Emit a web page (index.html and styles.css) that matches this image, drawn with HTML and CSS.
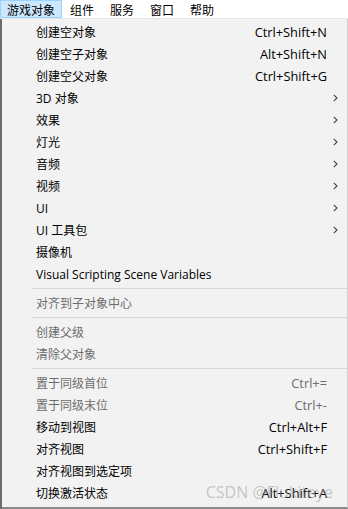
FILE: index.html
```html
<!DOCTYPE html>
<html lang="zh">
<head>
<meta charset="utf-8">
<link rel="stylesheet" href="styles.css">
</head>
<body>
<div class="menubar">
  <span class="mb-item active">游戏对象</span>
  <span class="mb-item">组件</span>
  <span class="mb-item">服务</span>
  <span class="mb-item">窗口</span>
  <span class="mb-item">帮助</span>
</div>
<div class="stage">
  <div class="behind"></div>
  <div class="menu">
    <div class="row"><span class="label">创建空对象</span><span class="key">Ctrl+Shift+N</span></div>
    <div class="row"><span class="label">创建空子对象</span><span class="key">Alt+Shift+N</span></div>
    <div class="row"><span class="label">创建空父对象</span><span class="key">Ctrl+Shift+G</span></div>
    <div class="row"><span class="label">3D 对象</span><svg class="chev" width="5" height="8" viewBox="0 0 5 8"><polyline points="0.8,0.8 4,4 0.8,7.2" fill="none" stroke="#444" stroke-width="1.1"/></svg></div>
    <div class="row"><span class="label">效果</span><svg class="chev" width="5" height="8" viewBox="0 0 5 8"><polyline points="0.8,0.8 4,4 0.8,7.2" fill="none" stroke="#444" stroke-width="1.1"/></svg></div>
    <div class="row"><span class="label">灯光</span><svg class="chev" width="5" height="8" viewBox="0 0 5 8"><polyline points="0.8,0.8 4,4 0.8,7.2" fill="none" stroke="#444" stroke-width="1.1"/></svg></div>
    <div class="row"><span class="label">音频</span><svg class="chev" width="5" height="8" viewBox="0 0 5 8"><polyline points="0.8,0.8 4,4 0.8,7.2" fill="none" stroke="#444" stroke-width="1.1"/></svg></div>
    <div class="row"><span class="label">视频</span><svg class="chev" width="5" height="8" viewBox="0 0 5 8"><polyline points="0.8,0.8 4,4 0.8,7.2" fill="none" stroke="#444" stroke-width="1.1"/></svg></div>
    <div class="row"><span class="label">UI</span><svg class="chev" width="5" height="8" viewBox="0 0 5 8"><polyline points="0.8,0.8 4,4 0.8,7.2" fill="none" stroke="#444" stroke-width="1.1"/></svg></div>
    <div class="row"><span class="label">UI 工具包</span><svg class="chev" width="5" height="8" viewBox="0 0 5 8"><polyline points="0.8,0.8 4,4 0.8,7.2" fill="none" stroke="#444" stroke-width="1.1"/></svg></div>
    <div class="row"><span class="label">摄像机</span></div>
    <div class="row"><span class="label">Visual Scripting Scene Variables</span></div>
    <div class="sep"></div>
    <div class="row disabled"><span class="label">对齐到子对象中心</span></div>
    <div class="sep"></div>
    <div class="row disabled"><span class="label">创建父级</span></div>
    <div class="row disabled"><span class="label">清除父对象</span></div>
    <div class="sep"></div>
    <div class="row disabled"><span class="label">置于同级首位</span><span class="key">Ctrl+=</span></div>
    <div class="row disabled"><span class="label">置于同级末位</span><span class="key">Ctrl+-</span></div>
    <div class="row"><span class="label">移动到视图</span><span class="key">Ctrl+Alt+F</span></div>
    <div class="row"><span class="label">对齐视图</span><span class="key">Ctrl+Shift+F</span></div>
    <div class="row"><span class="label">对齐视图到选定项</span></div>
    <div class="row"><span class="label">切换激活状态</span><span class="key">Alt+Shift+A</span></div>
    <div class="watermark">CSDN @Flukiteye</div>
  </div>
</div>
</body>
</html>
```
FILE: styles.css
```css
* { box-sizing: border-box; }
html, body {
  margin: 0;
  padding: 0;
  width: 348px;
  height: 509px;
  overflow: hidden;
  background: #f0f0f0;
  font-family: "Open Sans", "Noto Sans CJK SC", sans-serif;
  font-size: 12px;
  color: #000;
}
.menubar {
  display: flex;
  height: 19px;
  background: #fff;
  border-bottom: 1px solid #e6e6e6;
}
.mb-item {
  padding: 0 7px;
  height: 18px;
  line-height: 17px;
  font-family: "Noto Sans CJK SC", sans-serif;
  border: 1px solid transparent;
}
.mb-item.active {
  background: #cce8ff;
  border-color: #99d1ff;
  padding: 0 6px;
}
.stage {
  display: flex;
  height: 490px;
}
.behind {
  width: 2px;
  background: #6b6b6b;
}
.menu {
  position: relative;
  flex: 1;
  background: #f2f2f2;
  border-right: 1px solid #cfcfcf;
  border-bottom: 2px solid #8a8a8a;
  padding: 2px 0 0 0;
}
.row {
  display: flex;
  align-items: center;
  height: 22px;
  padding: 0 8px 0 34px;
}
.label {
  flex: 1;
  font-family: "Open Sans", "Noto Sans CJK SC", sans-serif;
  white-space: nowrap;
}
.key {
  margin-right: 12px;
  font-family: "Open Sans", "Noto Sans CJK SC", sans-serif;
  font-size: 12.8px;
}
.chev { margin-right: 1px; }
.disabled { color: #6d6d6d; }
.sep {
  height: 7px;
  margin-left: 30px;
  display: flex;
  align-items: center;
}
.sep::after {
  content: "";
  flex: 1;
  height: 1px;
  background: #d7d7d7;
}
.watermark {
  position: absolute;
  right: 14px;
  bottom: 4px;
  font-family: "Open Sans", sans-serif;
  font-size: 16px;
  color: rgba(150, 150, 150, 0.5);
  pointer-events: none;
}
```
